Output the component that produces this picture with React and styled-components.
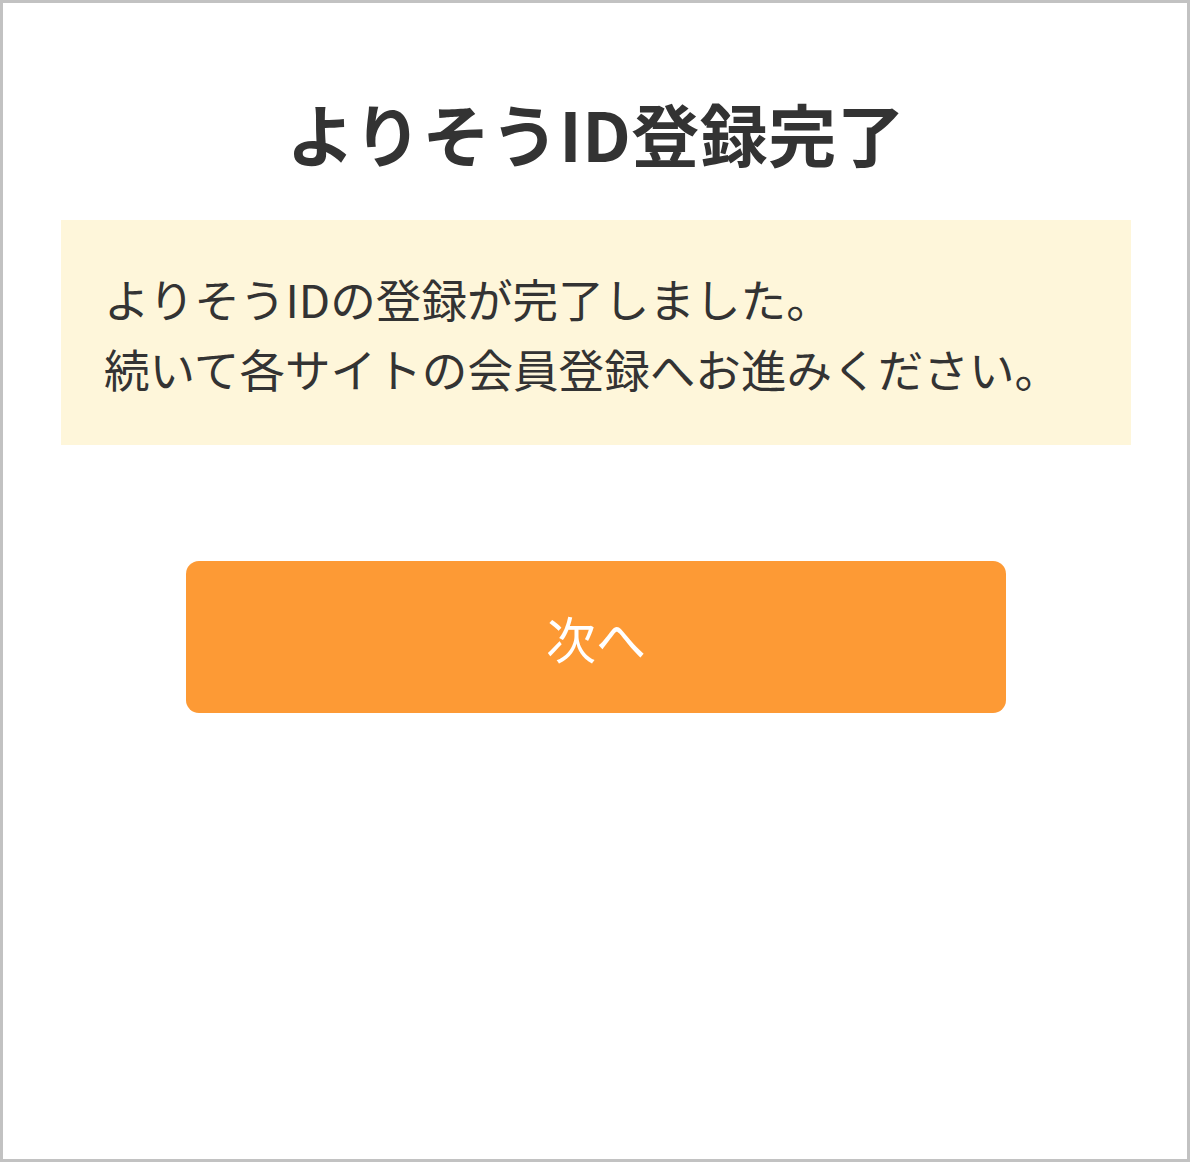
import styled, { createGlobalStyle } from "styled-components";

const GlobalStyle = createGlobalStyle`
  html, body {
    margin: 0;
    padding: 0;
    background: #ffffff;
  }
  body {
    font-family: "Noto Sans CJK JP", "Noto Sans", sans-serif;
    color: #333333;
  }
`;

const Frame = styled.div`
  box-sizing: border-box;
  width: 1190px;
  height: 1162px;
  border: 3px solid #c2c2c2;
  background: #ffffff;
  display: flex;
  flex-direction: column;
  align-items: center;
  padding: 88px 56px 0 58px;
`;

const Title = styled.h1`
  margin: 0;
  font-size: 68px;
  font-weight: 700;
  line-height: 84px;
  color: #333333;
  letter-spacing: 0.5px;
`;

const Notice = styled.div`
  box-sizing: border-box;
  width: 100%;
  margin-top: 45px;
  background: #fef6da;
  padding: 43px 43px 42px;
`;

const NoticeLine = styled.p`
  margin: 0;
  font-size: 45.6px;
  line-height: 70px;
  color: #333333;
  white-space: nowrap;
`;

const NextButton = styled.button`
  margin-top: 116px;
  width: 820px;
  height: 152px;
  border: none;
  border-radius: 13px;
  background: #fd9a35;
  color: #ffffff;
  font-family: "Noto Sans CJK JP", "Noto Sans", sans-serif;
  font-size: 50px;
  cursor: pointer;
`;

export default function App() {
  return (
    <>
      <GlobalStyle />
      <Frame>
        <Title>よりそうID登録完了</Title>
        <Notice>
          <NoticeLine>よりそうIDの登録が完了しました。</NoticeLine>
          <NoticeLine>続いて各サイトの会員登録へお進みください。</NoticeLine>
        </Notice>
        <NextButton>次へ</NextButton>
      </Frame>
    </>
  );
}
